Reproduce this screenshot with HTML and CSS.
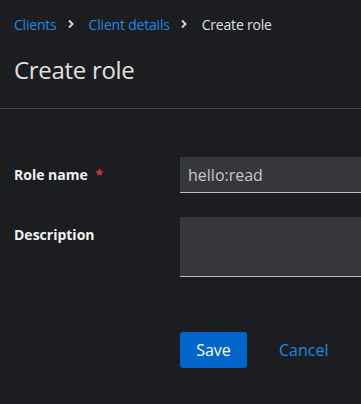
FILE: index.html
```html
<!DOCTYPE html>
<html lang="en">
<head>
<meta charset="UTF-8">
<title>Create role</title>
<link rel="stylesheet" href="styles.css">
</head>
<body>
	<section class="page-header">
		<nav class="breadcrumb">
			<a href="#">Clients</a>
			<span class="sep"><svg width="8" height="10" viewBox="0 0 8 10"><path d="M2 1.5 L5.5 5 L2 8.5" fill="none" stroke="#d2d2d2" stroke-width="2"/></svg></span>
			<a href="#">Client details</a>
			<span class="sep"><svg width="8" height="10" viewBox="0 0 8 10"><path d="M2 1.5 L5.5 5 L2 8.5" fill="none" stroke="#d2d2d2" stroke-width="2"/></svg></span>
			<span class="current">Create role</span>
		</nav>
		<h1 class="title">Create role</h1>
	</section>
	<form class="form">
		<div class="row">
			<label class="label">Role name <span class="req">*</span></label>
			<input class="field" type="text" value="hello:read">
		</div>
		<div class="row">
			<label class="label">Description</label>
			<textarea class="field area"></textarea>
		</div>
		<div class="actions">
			<button type="button" class="btn-save">Save</button>
			<button type="button" class="btn-link">Cancel</button>
		</div>
	</form>
</body>
</html>
```
FILE: styles.css
```css
html,body{margin: 0;height: 100%;}
body{
	background-color: #1b1d21;
	color: #e0e0e0;
	font-family: "Open Sans", "Liberation Sans", sans-serif;
	font-size: 14px;
	overflow: hidden;
}
.page-header{
	padding: 13px 14px 23px;
	border-bottom: 1px solid #444548;
}
.breadcrumb{
	display: flex;
	align-items: center;
	height: 22px;
	letter-spacing: -0.2px;
}
.breadcrumb a{color: #1f8ae0;text-decoration: none;}
.breadcrumb .sep{display: flex;margin: 0 14px 0 10px;}
.breadcrumb .current{color: #e0e0e0;}
.title{
	margin: 20px 0 0;
	font-size: 24px;
	font-weight: 400;
	line-height: 30px;
	letter-spacing: -0.3px;
	color: #e0e0e0;
}
.form{
	padding: 48px 0 0 14px;
}
.row{
	display: flex;
	margin-bottom: 24px;
}
.label{
	width: 166px;
	flex: none;
	font-weight: 700;
	color: #f0f0f0;
	line-height: 36px;
}
.req{color: #e2392d;margin-left: 4px;}
.field{
	flex: none;
	width: 181px;
	height: 36px;
	box-sizing: border-box;
	background-color: #36373b;
	border: none;
	border-bottom: 1px solid #b8bbbe;
	color: #c7c7c7;
	font-family: inherit;
	font-size: 16px;
	padding: 0 8px;
	outline: none;
}
.area{height: 60px;resize: none;}
.actions{
	display: flex;
	align-items: center;
	padding-left: 166px;
	margin-top: 55px;
}
.btn-save{
	background-color: #0066cc;
	color: #fff;
	border: none;
	border-radius: 3px;
	height: 36px;
	width: 67px;
	font-family: inherit;
	font-size: 16px;
}
.btn-link{
	background: none;
	border: none;
	color: #1f8ae0;
	font-family: inherit;
	font-size: 16px;
	margin-left: 24px;
	padding: 0 8px;
}
```
